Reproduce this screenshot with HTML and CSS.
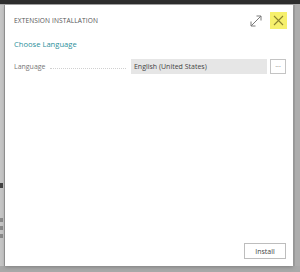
FILE: index.html
```html
<!DOCTYPE html>
<html lang="en">
<head>
    <meta charset="UTF-8">
    <title>Extension Installation</title>
    <link rel="stylesheet" href="styles.css">
</head>
<body>
    <div class="topbar"></div>
    <div class="stage">
        <div class="backdrop-left">
            <span class="mark dark"></span>
            <span class="mark"></span>
            <span class="mark"></span>
            <span class="mark"></span>
        </div>
        <div class="dialog">
            <div class="dialog-header">
                <span class="title">Extension Installation</span>
                <div class="actions">
                    <button class="icon-btn expand" title="Expand">
                        <svg width="12" height="12" viewBox="0 0 12 12">
                            <path d="M1 11 L11 1 M6.5 1 H11 V5.5 M1 6.5 V11 H5.5" fill="none" stroke="#7a7a7a" stroke-width="1"/>
                        </svg>
                    </button>
                    <button class="icon-btn close" title="Close">
                        <svg width="11" height="11" viewBox="0 0 11 11">
                            <path d="M1 1 L10 10 M10 1 L1 10" fill="none" stroke="#8c8430" stroke-width="1.1"/>
                        </svg>
                    </button>
                </div>
            </div>
            <div class="dialog-body">
                <div class="group-title">Choose Language</div>
                <div class="field-row">
                    <div class="field-label">
                        <span>Language</span>
                        <span class="leader"></span>
                    </div>
                    <div class="field-value">English (United States)</div>
                    <button class="lookup">···</button>
                </div>
            </div>
            <div class="dialog-footer">
                <button class="install">Install</button>
            </div>
        </div>
        <div class="backdrop-right"></div>
    </div>
</body>
</html>
```

FILE: styles.css
```css
* {
    box-sizing: border-box;
}
body {
    margin: 0;
    width: 300px;
    height: 272px;
    overflow: hidden;
    background-color: #a9a9a9;
    font-family: "Open Sans", "Noto Sans", Arial, sans-serif;
}
.topbar {
    height: 4px;
    background-color: #2e2e2e;
}
.stage {
    display: flex;
    height: 262px;
    padding-top: 1px;
}
/* page content behind the overlay, only a sliver shows */
.backdrop-left {
    width: 5px;
    display: flex;
    flex-direction: column;
    gap: 4px;
    overflow: hidden;
    background-color: #c6c6c6;
    border-right: 1px solid #9d9d9d;
}
.mark {
    width: 3px;
    height: 4px;
    background-color: #8a8a8a;
}
.mark.dark {
    margin-top: 178px;
    margin-bottom: 26px;
    height: 5px;
    background-color: #444;
}
.dialog {
    width: 289px;
    display: flex;
    flex-direction: column;
    background-color: #fff;
    padding: 7px 6px 7px 9px;
    box-shadow: 0 1px 4px rgba(0,0,0,0.25);
}
.backdrop-right {
    width: 6px;
    background-color: #adadad;
    border-left: 1px solid #9a9a9a;
    margin-left: 1px;
}
.dialog-header {
    display: flex;
    align-items: center;
    justify-content: space-between;
}
.title {
    font-size: 6.6px;
    text-transform: uppercase;
    color: #555;
    letter-spacing: 0.1px;
}
.actions {
    display: flex;
    align-items: center;
    gap: 8px;
}
.icon-btn {
    border: none;
    padding: 0;
    background: none;
    display: flex;
    align-items: center;
    justify-content: center;
}
.expand {
    width: 13px;
    height: 13px;
}
.close {
    width: 17px;
    height: 17px;
    background-color: #f6f06c;
}
.dialog-body {
    flex: 1;
}
.group-title {
    margin-top: 10px;
    font-size: 7.6px;
    line-height: 10px;
    color: #2b8f9b;
}
.field-row {
    display: flex;
    align-items: center;
    margin-top: 10px;
    height: 15px;
}
.field-label {
    width: 117px;
    display: flex;
    align-items: center;
    font-size: 7px;
    color: #777;
    padding-right: 5px;
}
.leader {
    flex: 1;
    margin-left: 4px;
    margin-top: 3px;
    border-bottom: 1px dotted #d0d0d0;
}
.field-value {
    width: 136px;
    height: 15px;
    line-height: 15px;
    padding-left: 3px;
    font-size: 7px;
    color: #444;
    background-color: #e6e6e6;
}
.lookup {
    margin-left: 3px;
    width: 16px;
    height: 15px;
    padding: 0;
    border: 1px solid #c4c4c4;
    background-color: #fff;
    color: #666;
    font-size: 7px;
    line-height: 11px;
    font-family: inherit;
}
.dialog-footer {
    display: flex;
    justify-content: flex-end;
    padding-right: 1px;
}
.install {
    width: 42px;
    height: 16px;
    padding: 0;
    border: 1px solid #bdbdbd;
    background-color: #fff;
    color: #444;
    font-size: 7px;
    font-family: inherit;
}
```
